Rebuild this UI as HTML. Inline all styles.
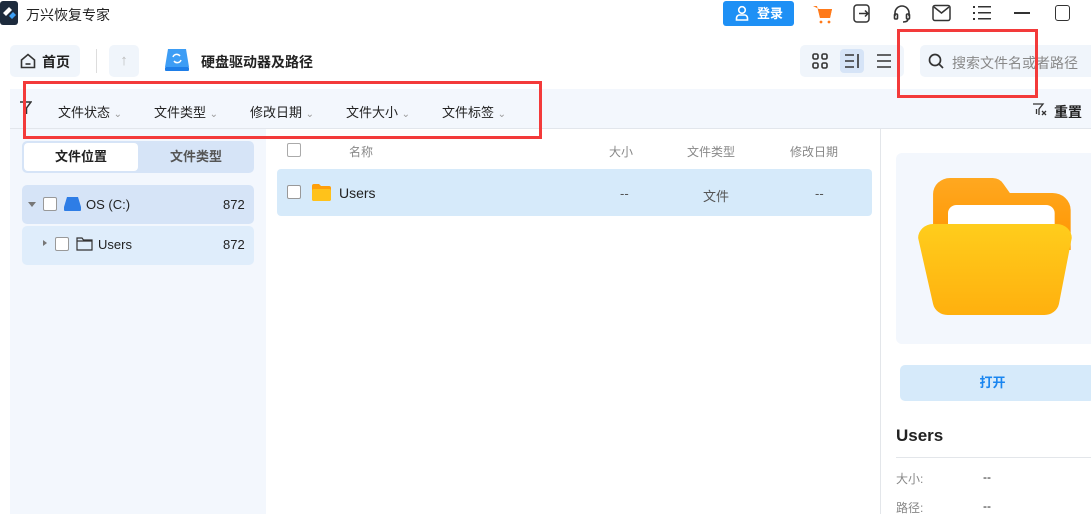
<!DOCTYPE html>
<html><head><meta charset="utf-8"><style>
*{margin:0;padding:0;box-sizing:border-box}
body{width:1091px;height:514px;overflow:hidden;background:#fff;font-family:"Liberation Sans","Noto Sans CJK SC",sans-serif;color:#222;position:relative}
.a{position:absolute}
.t{font-size:13px;white-space:nowrap}
</style></head><body>
<svg class="a" style="left:0;top:0" width="18" height="26" viewBox="0 0 18 26"><rect x="0" y="1" width="18" height="24" rx="3" fill="#1d2b3d"/><path d="M3 13 L9 7 L12 10 L6 16Z" fill="#fff"/><path d="M9 16 L13 12 L16 15 L12 19Z" fill="#3ea0f5"/></svg>
<div class="a t" style="left:26px;top:5px;font-size:14px">万兴恢复专家</div>
<div class="a" style="left:723px;top:1px;width:71px;height:25px;background:#1e90f5;border-radius:3px;color:#fff;font-size:13px;font-weight:bold;line-height:25px;padding-left:34px">登录</div>
<svg class="a" style="left:734px;top:5px" width="16" height="16" viewBox="0 0 16 16" fill="none" stroke="#fff" stroke-width="1.6"><circle cx="8" cy="5" r="3.3"/><path d="M2.5 15v-2a3 3 0 0 1 3-3h5a3 3 0 0 1 3 3v2z"/></svg>
<svg class="a" style="left:812px;top:4px" width="22" height="20" viewBox="0 0 22 20"><path d="M1 2h4l3 12h10l2-9H7" fill="#ff7a1a"/><path d="M6 5h14l-2 9H8z" fill="#ff7a1a"/><circle cx="9" cy="18" r="1.4" fill="#ff7a1a"/><circle cx="17" cy="18" r="1.4" fill="#ff7a1a"/></svg>
<svg class="a" style="left:853px;top:4px" width="18" height="19" fill="none" stroke="#333" stroke-width="1.5"><rect x="1" y="1" width="15" height="17" rx="3"/><path d="M6 9.5h9M12 6.5l3 3-3 3"/></svg>
<svg class="a" style="left:893px;top:4px" width="18" height="19" fill="none" stroke="#333" stroke-width="1.6"><path d="M2 12V9a7 7 0 0 1 14 0v3"/><rect x="1.5" y="10" width="3" height="5" rx="1"/><rect x="13.5" y="10" width="3" height="5" rx="1"/><path d="M15 15c0 2-2 3-5 3"/></svg>
<svg class="a" style="left:932px;top:4px" width="19" height="18" fill="none" stroke="#333" stroke-width="1.5"><rect x="1" y="1.5" width="17" height="15" rx="2"/><path d="M2 3l7.5 6L17 3"/></svg>
<svg class="a" style="left:973px;top:5px" width="18" height="16" fill="#333"><rect x="0" y="1" width="2" height="2"/><rect x="5" y="1" width="13" height="1.5"/><rect x="0" y="7" width="2" height="2"/><rect x="5" y="7" width="13" height="1.5"/><rect x="0" y="13" width="2" height="2"/><rect x="5" y="13" width="13" height="1.5"/></svg>
<div class="a" style="left:1014px;top:12px;width:16px;height:2px;background:#333"></div>
<div class="a" style="left:1055px;top:5px;width:15px;height:16px;border:1.6px solid #333;border-radius:3px"></div>
<div class="a" style="left:10px;top:45px;width:70px;height:32px;background:#f0f5fb;border-radius:5px"></div>
<svg class="a" style="left:20px;top:53px" width="16" height="16" fill="none" stroke="#333" stroke-width="1.6"><path d="M1.5 7L8 1.5 14.5 7v7.5h-13z"/><path d="M5.5 11h5"/></svg>
<div class="a t" style="left:42px;top:52px;font-size:14px;font-weight:bold">首页</div>
<div class="a" style="left:96px;top:49px;width:1px;height:24px;background:#ddd"></div>
<div class="a" style="left:109px;top:45px;width:30px;height:32px;background:#f0f5fb;border-radius:5px;color:#bbb;font-size:15px;text-align:center;line-height:32px">↑</div>
<svg class="a" style="left:163px;top:47px" width="28" height="26"><path d="M5 2h18l3 18H2z" fill="#3d9df5"/><rect x="2" y="20" width="24" height="4" rx="1" fill="#1e7ee8"/><path d="M10 10a4 4 0 0 1 7-1M18 13a4 4 0 0 1-7 1" stroke="#fff" stroke-width="1.5" fill="none"/></svg>
<div class="a t" style="left:201px;top:52px;font-size:14px;font-weight:bold">硬盘驱动器及路径</div>
<div class="a" style="left:800px;top:45px;width:104px;height:32px;background:#f0f5fb;border-radius:5px"></div>
<svg class="a" style="left:812px;top:53px" width="16" height="16" fill="none" stroke="#333" stroke-width="1.6"><rect x="1" y="1" width="5" height="5" rx="1.5"/><rect x="10" y="1" width="5" height="5" rx="1.5"/><rect x="1" y="10" width="5" height="5" rx="1.5"/><rect x="10" y="10" width="5" height="5" rx="1.5"/></svg>
<div class="a" style="left:840px;top:49px;width:24px;height:24px;background:#d6e4f7;border-radius:4px"></div>
<svg class="a" style="left:844px;top:53px" width="16" height="16" stroke="#333" stroke-width="1.6"><path d="M1 2h9M1 8h9M1 14h9M14 1v14"/></svg>
<svg class="a" style="left:876px;top:53px" width="16" height="16" stroke="#333" stroke-width="1.6"><path d="M1 2h14M1 8h14M1 14h14"/></svg>
<div class="a" style="left:920px;top:45px;width:171px;height:32px;background:#f0f5fb;border-radius:5px 0 0 5px"></div>
<svg class="a" style="left:928px;top:53px" width="17" height="17" fill="none" stroke="#333" stroke-width="1.7"><circle cx="7" cy="7" r="5.5"/><path d="M11 11l4 4"/></svg>
<div class="a t" style="left:952px;top:53px;font-size:14px;color:#888">搜索文件名或者路径</div>
<div class="a" style="left:10px;top:89px;width:1081px;height:40px;background:#f3f7fd;border-bottom:1px solid #e2e6ec"></div>
<svg class="a" style="left:19px;top:101px" width="13" height="14" fill="none" stroke="#333" stroke-width="1.5"><path d="M1 1h11L7.5 7v6M5.5 7v5"/></svg>
<div class="a t" style="left:58px;top:102px">文件状态 <span style="color:#999;font-size:10px">⌄</span></div>
<div class="a t" style="left:154px;top:102px">文件类型 <span style="color:#999;font-size:10px">⌄</span></div>
<div class="a t" style="left:250px;top:102px">修改日期 <span style="color:#999;font-size:10px">⌄</span></div>
<div class="a t" style="left:346px;top:102px">文件大小 <span style="color:#999;font-size:10px">⌄</span></div>
<div class="a t" style="left:442px;top:102px">文件标签 <span style="color:#999;font-size:10px">⌄</span></div>
<svg class="a" style="left:1032px;top:103px" width="16" height="14" fill="none" stroke="#333" stroke-width="1.3"><path d="M1 1h10L7 6v6M4.5 6v5M10 8l4 4M14 8l-4 4"/></svg>
<div class="a t" style="left:1054px;top:102px;font-size:14px;font-weight:bold">重置</div>
<div class="a" style="left:10px;top:129px;width:256px;height:385px;background:#f3f7fd"></div>
<div class="a" style="left:22px;top:141px;width:232px;height:32px;background:#d6e4f7;border-radius:5px"></div>
<div class="a t" style="left:24px;top:143px;width:114px;height:28px;background:#fff;border-radius:4px;text-align:center;line-height:28px;font-weight:bold">文件位置</div>
<div class="a t" style="left:140px;top:143px;width:112px;height:28px;text-align:center;line-height:28px;font-weight:bold;color:#555">文件类型</div>
<div class="a" style="left:22px;top:185px;width:232px;height:39px;background:#d6e4f7;border-radius:5px"></div>
<div class="a" style="left:28px;top:202px;border:4px solid transparent;border-top:5px solid #777"></div>
<div class="a" style="left:43px;top:197px;width:14px;height:14px;background:#fff;border:1px solid #999;border-radius:2px"></div>
<svg class="a" style="left:64px;top:197px" width="17" height="14"><path d="M3 0h11l3 10v3a1 1 0 0 1-1 1H1a1 1 0 0 1-1-1v-3z" fill="#2e7de6"/></svg>
<div class="a t" style="left:86px;top:197px">OS (C:)</div>
<div class="a t" style="left:223px;top:197px">872</div>
<div class="a" style="left:22px;top:226px;width:232px;height:39px;background:#dfedfb;border-radius:5px"></div>
<div class="a" style="left:43px;top:240px;border:3px solid transparent;border-left:4px solid #777"></div>
<div class="a" style="left:55px;top:237px;width:14px;height:14px;background:#fff;border:1px solid #999;border-radius:2px"></div>
<svg class="a" style="left:76px;top:236px" width="17" height="15" fill="none" stroke="#333" stroke-width="1.2"><path d="M1 2h5l1.5 2H16v10H1zM1 5h15"/></svg>
<div class="a t" style="left:98px;top:237px">Users</div>
<div class="a t" style="left:223px;top:237px">872</div>
<div class="a" style="left:287px;top:143px;width:14px;height:14px;border:1px solid #aaa;border-radius:2px"></div>
<div class="a t" style="left:349px;top:143px;font-size:12px;color:#888">名称</div>
<div class="a t" style="left:609px;top:143px;font-size:12px;color:#888">大小</div>
<div class="a t" style="left:687px;top:143px;font-size:12px;color:#888">文件类型</div>
<div class="a t" style="left:790px;top:143px;font-size:12px;color:#888">修改日期</div>
<div class="a" style="left:277px;top:169px;width:595px;height:47px;background:#d6eafa;border-radius:4px"></div>
<div class="a" style="left:287px;top:185px;width:14px;height:14px;background:#fff;border:1px solid #999;border-radius:2px"></div>
<svg class="a" style="left:312px;top:184px" width="19" height="17"><path d="M0 2a2 2 0 0 1 2-2h5l2 2h8a2 2 0 0 1 2 2v11a2 2 0 0 1-2 2H2a2 2 0 0 1-2-2z" fill="#ff9f0a"/><rect x="0" y="5" width="19" height="12" rx="2" fill="#ffc21a"/></svg>
<div class="a t" style="left:339px;top:185px;font-size:14px">Users</div>
<div class="a t" style="left:620px;top:186px;color:#555">--</div>
<div class="a t" style="left:703px;top:186px;color:#555">文件</div>
<div class="a t" style="left:815px;top:186px;color:#555">--</div>
<div class="a" style="left:880px;top:129px;width:1px;height:385px;background:#e3e6ea"></div>
<div class="a" style="left:896px;top:153px;width:200px;height:191px;background:#f3f7fd;border-radius:6px"></div>
<svg class="a" style="left:916px;top:176px" width="160" height="148" viewBox="0 0 150 148" preserveAspectRatio="none"><defs><linearGradient id="g1" x1="0" y1="0" x2="0" y2="1"><stop offset="0" stop-color="#ffa820"/><stop offset="1" stop-color="#ff9500"/></linearGradient><linearGradient id="g2" x1="0" y1="0" x2="0" y2="1"><stop offset="0" stop-color="#ffcd1c"/><stop offset="1" stop-color="#ffb00e"/></linearGradient></defs><path d="M16 18a16 16 0 0 1 16-16h40a12 12 0 0 1 10 6l6 9h40a17 17 0 0 1 17 17v40H16z" fill="url(#g1)"/><rect x="30" y="29" width="100" height="50" rx="8" fill="#fff"/><path d="M2 62a14 14 0 0 1 14-14h116a14 14 0 0 1 14 14l-12 66a14 14 0 0 1-14 11H30a14 14 0 0 1-14-11z" fill="url(#g2)"/></svg>
<div class="a" style="left:900px;top:365px;width:195px;height:36px;background:#d6eafa;border-radius:5px;text-align:center;line-height:36px;color:#1a86f0;font-size:13px;font-weight:bold;padding-right:10px">打开</div>
<div class="a t" style="left:896px;top:426px;font-size:17px;font-weight:bold">Users</div>
<div class="a" style="left:896px;top:457px;width:195px;height:1px;background:#e3e6ea"></div>
<div class="a t" style="left:896px;top:470px;font-size:12px;color:#888">大小:</div>
<div class="a t" style="left:983px;top:470px;font-size:12px">--</div>
<div class="a t" style="left:896px;top:499px;font-size:12px;color:#888">路径:</div>
<div class="a t" style="left:983px;top:499px;font-size:12px">--</div>
<div class="a" style="left:23px;top:81px;width:519px;height:58px;border:3px solid #f33a3a"></div>
<div class="a" style="left:897px;top:29px;width:141px;height:69px;border:3px solid #f33a3a"></div>
</body></html>
